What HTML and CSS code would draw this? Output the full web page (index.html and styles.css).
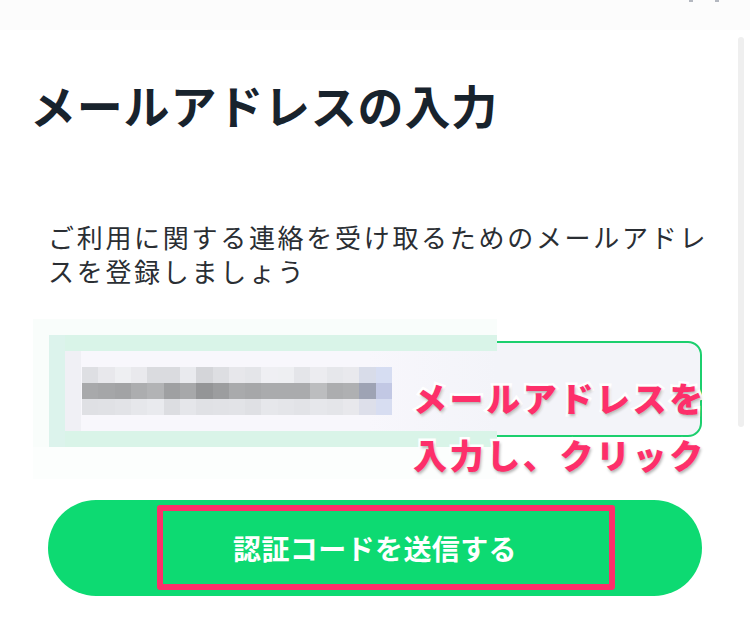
FILE: index.html
```html
<!DOCTYPE html>
<html lang="ja">
    <head>
        <meta charset="utf-8">
        <title>メールアドレスの入力</title>
        <link rel="stylesheet" href="styles.css">
    </head>
    <body>
        <div class="topbar">
            <span class="topbar-mark"></span>
            <span class="topbar-mark"></span>
        </div>

        <div class="page">
            <h1 class="title">メールアドレスの入力</h1>
            <p class="lead">ご利用に関する連絡を受け取るためのメールアドレスを登録しましょう</p>

            <div class="field">
                <div class="input"></div>
                <div class="mosaic">
                    <div class="mosaic-ring">
                        <div class="mosaic-field">
                            <div class="mosaic-row row-top"></div>
                            <div class="mosaic-row row-mid"></div>
                            <div class="mosaic-row row-bottom"></div>
                        </div>
                    </div>
                </div>
                <div class="note">メールアドレスを<br>入力し、クリック</div>
            </div>

            <div class="submit-wrap">
                <button class="submit">認証コードを送信する</button>
                <span class="highlight"></span>
            </div>
        </div>

        <div class="scrollbar"></div>
    </body>
</html>
```

FILE: styles.css
```css
body {
    margin: 0;
    background-color: #fff;
    font-family: "Noto Sans CJK JP", "Noto Sans", sans-serif;
}

.topbar {
    height: 30px;
    background-color: #fcfcfc;
    display: flex;
    justify-content: flex-end;
    gap: 22px;
    padding-right: 31px;
}

.topbar-mark {
    width: 4px;
    height: 2px;
    background-color: #b4b8c0;
}

.page {
    padding: 0 48px;
}

.title {
    margin: 46px 0 0 -18px;
    font-size: 46px;
    line-height: 56px;
    font-weight: 700;
    letter-spacing: 0.8px;
    color: #18232d;
}

.lead {
    margin: 88px -10px 0 0;
    font-size: 26px;
    line-height: 34px;
    letter-spacing: 2.7px;
    color: #2a2e33;
}

.field {
    position: relative;
    margin-top: 53px;
}

.input {
    height: 92px;
    border: 2px solid #1ccf6e;
    border-radius: 14px;
    background-color: #f3f4f9;
}

/* pixelated email text lies over the input */
.mosaic {
    position: absolute;
    left: -15px;
    top: -22px;
    width: 448px;
    padding: 16px 0 32px 16px;
    background: linear-gradient(180deg, #f9fdfb 0 80%, #fcfefd 80% 100%);
}

.mosaic-ring {
    padding: 16px 0 16px 16px;
    background: linear-gradient(90deg, #dcf3ec 0 16px, #d9f4e8 16px 100%);
}

.mosaic-field {
    padding: 16px 0 16px 17px;
    background: linear-gradient(90deg, #f0f0f5 0 16px, #f8f7fc 16px 70%, #f3f4f9 100%);
}

.mosaic-row {
    width: 310px;
    height: 16px;
}

.row-top {
    background: linear-gradient(90deg,
        #dedfe3 0 5.26%, #e8e8ec 5.26% 10.53%, #eeeff2 10.53% 15.79%, #e9e9ed 15.79% 21.05%,
        #dadbdf 21.05% 26.32%, #dadbdf 26.32% 31.58%, #e9eaee 31.58% 36.84%, #d4d5d9 36.84% 42.11%,
        #dddee2 42.11% 47.37%, #e7e7eb 47.37% 52.63%, #e4e5e9 52.63% 57.89%, #efeff3 57.89% 63.16%,
        #eeeff2 63.16% 68.42%, #e4e5e9 68.42% 73.68%, #ececf0 73.68% 78.95%, #e6e7eb 78.95% 84.21%,
        #e9e9ed 84.21% 89.47%, #d8dce9 89.47% 94.74%, #d6ddf2 94.74% 100%);
}

.row-mid {
    background: linear-gradient(90deg,
        #a8a9ab 0 5.26%, #a5a6a8 5.26% 10.53%, #a2a3a5 10.53% 15.79%, #acadaf 15.79% 21.05%,
        #b2b3b5 21.05% 26.32%, #9fa0a2 26.32% 31.58%, #a7a8aa 31.58% 36.84%, #949597 36.84% 42.11%,
        #9c9d9f 42.11% 47.37%, #a9aaac 47.37% 52.63%, #a6a7a9 52.63% 57.89%, #aaabad 57.89% 63.16%,
        #aaabad 63.16% 68.42%, #aaabad 68.42% 73.68%, #bcbdbf 73.68% 78.95%, #acadaf 78.95% 84.21%,
        #afb0b2 84.21% 89.47%, #9ea3b4 89.47% 94.74%, #c2c8e4 94.74% 100%);
}

.row-bottom {
    background: linear-gradient(90deg,
        #dfe0e4 0 5.26%, #e0e1e5 5.26% 10.53%, #e2e3e7 10.53% 15.79%, #e6e7eb 15.79% 21.05%,
        #e9eaee 21.05% 26.32%, #dcdde1 26.32% 31.58%, #e5e6ea 31.58% 36.84%, #e0e1e5 36.84% 42.11%,
        #e1e2e6 42.11% 47.37%, #e2e3e7 47.37% 52.63%, #dfe0e4 52.63% 57.89%, #e6e7eb 57.89% 63.16%,
        #e4e5e9 63.16% 68.42%, #e2e3e7 68.42% 73.68%, #e6e7eb 73.68% 78.95%, #e4e5e9 78.95% 84.21%,
        #e8e8ec 84.21% 89.47%, #dddfea 89.47% 94.74%, #d7ddf1 94.74% 100%);
}

/* pink annotation over the input */
.note {
    position: absolute;
    left: 365px;
    top: 28px;
    font-size: 34px;
    line-height: 57px;
    font-weight: 900;
    letter-spacing: 2.6px;
    white-space: nowrap;
    color: #fd2f6a;
    -webkit-text-stroke: 5px #fff;
    paint-order: stroke fill;
    text-shadow: 1px 2px 3px rgba(0, 0, 0, 0.3);
}

.submit-wrap {
    position: relative;
    margin-top: 63px;
}

.submit {
    width: 100%;
    height: 96px;
    border: 0;
    border-radius: 48px;
    background-color: #0dda72;
    cursor: pointer;
    font-family: inherit;
    font-size: 28px;
    font-weight: 700;
    letter-spacing: 0.4px;
    color: #fff;
}

/* red annotation frame over the button */
.highlight {
    position: absolute;
    left: 109px;
    top: 5px;
    width: 446px;
    height: 73px;
    border: 6px solid #fd2f6a;
    border-radius: 3px;
}

.scrollbar {
    position: absolute;
    top: 37px;
    right: 6px;
    width: 6px;
    height: 390px;
    border-radius: 3px;
    background-color: #efefef;
}
```
